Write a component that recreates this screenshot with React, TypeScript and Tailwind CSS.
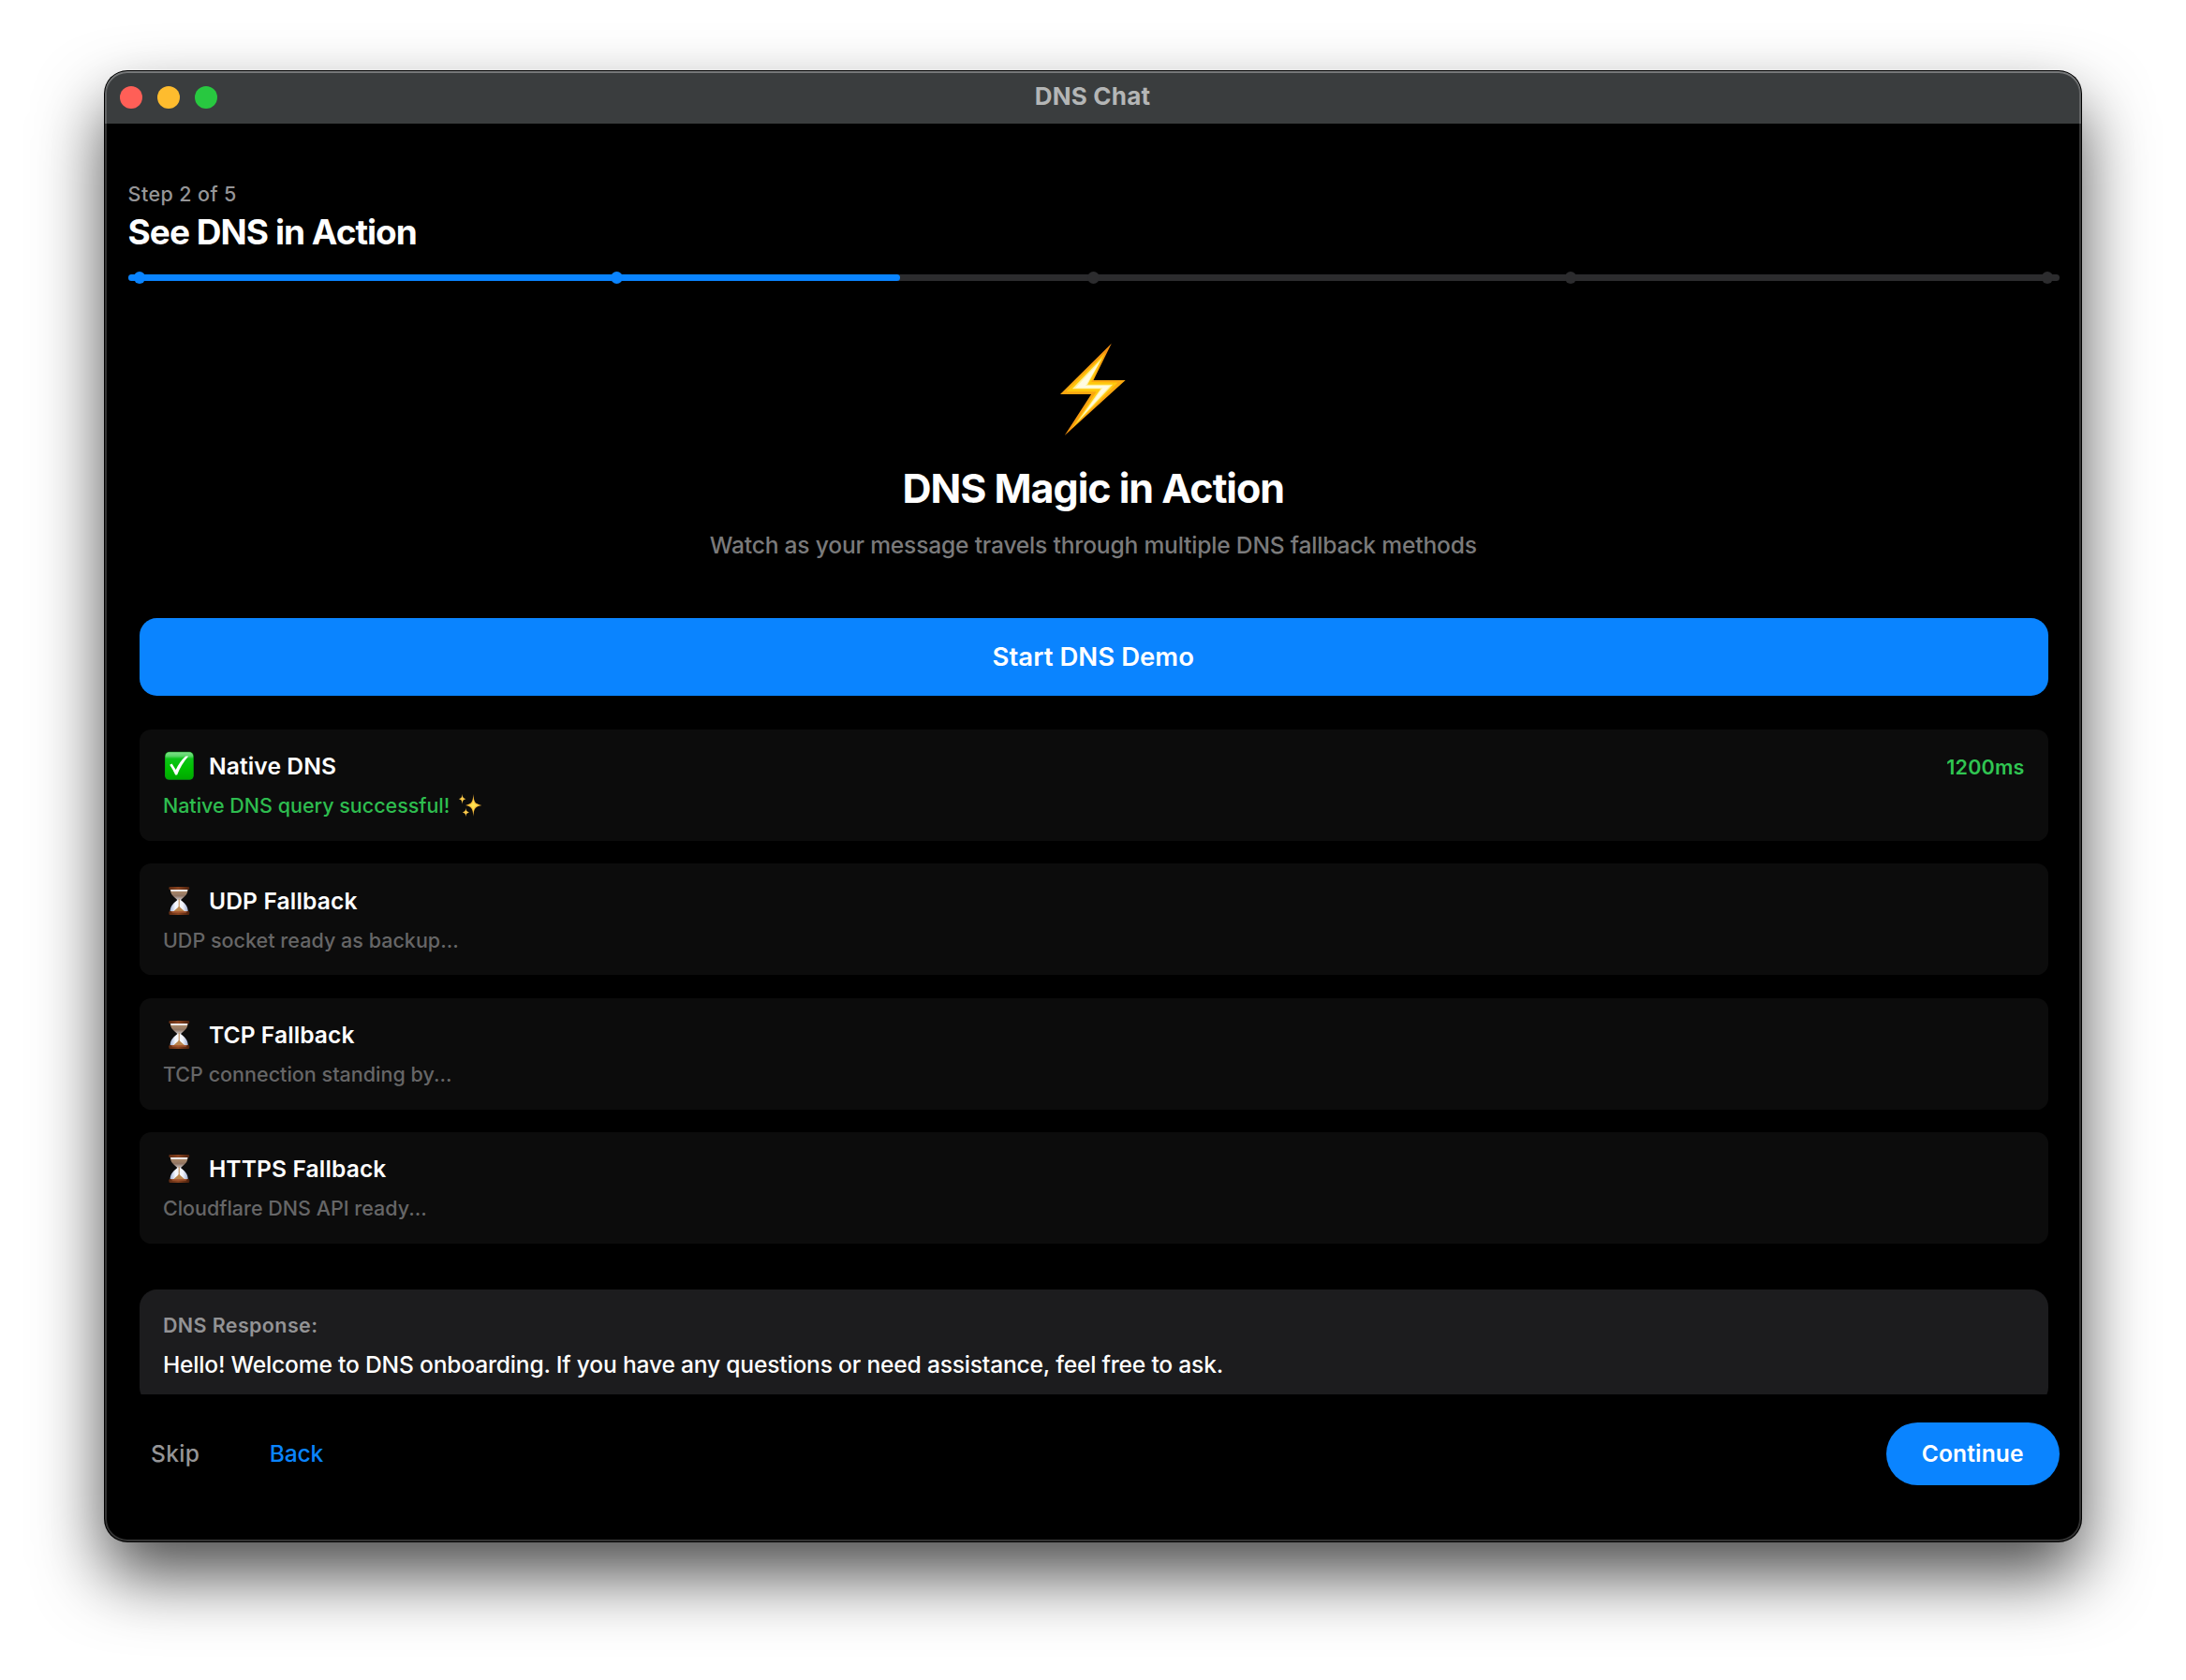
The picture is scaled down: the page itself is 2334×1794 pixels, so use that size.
function BoltIcon() {
  return (
    <svg width="71" height="101" viewBox="97 50 210 300" preserveAspectRatio="none" role="img" aria-label="Lightning bolt">
      <defs>
        <linearGradient id="bolt-edge" x1="0" y1="0" x2="0" y2="1">
          <stop offset="0" stopColor="#f08a12" />
          <stop offset="0.3" stopColor="#fba30c" />
          <stop offset="0.45" stopColor="#fbab10" />
          <stop offset="1" stopColor="#f7930f" />
        </linearGradient>
      </defs>
      <path d="M259 52 202 169 303 169 111 344 195 213 97 213Z" fill="url(#bolt-edge)" />
      <path d="M239 82 195 175 279 176 134 322 211 205 116 205Z" fill="#ffc90d" />
      <path d="M229 98 183 183 263 183 149 304 225 196 135 196Z" fill="#fff3a0" />
      <path d="M221 112 177 187 254 187 169 280 231 193 145 193Z" fill="#fffbe0" />
    </svg>
  );
}

function CheckIcon() {
  return (
    <svg width="34" height="34" viewBox="0 0 34 34" role="img" aria-label="Done">
      <defs>
        <linearGradient id="check-bg" x1="0" y1="0" x2="0" y2="1">
          <stop offset="0" stopColor="#7fe08a" />
          <stop offset="0.14" stopColor="#5ad768" />
          <stop offset="0.24" stopColor="#0cc418" />
          <stop offset="0.6" stopColor="#00c000" />
          <stop offset="1" stopColor="#00a800" />
        </linearGradient>
      </defs>
      <rect x="2" y="1.8" width="30.8" height="30" rx="4.6" fill="#069a10" />
      <rect x="2.6" y="2.3" width="29.6" height="28.8" rx="4.2" fill="url(#check-bg)" />
      <path d="M7.2 15.8 9.6 14.6 13.7 21Q17.6 12.4 24.2 6.4L27.2 6.6Q19.4 15.4 15.1 26.6L13.2 26.6Q10.6 20.6 7.2 15.8Z" fill="#fff" />
    </svg>
  );
}

function HourglassIcon() {
  return (
    <svg width="34" height="34" viewBox="0 0 34 34" role="img" aria-label="Waiting">
      <defs>
        <linearGradient id="hg-wood" x1="0" y1="0" x2="1" y2="0">
          <stop offset="0" stopColor="#5f2b12" />
          <stop offset="0.45" stopColor="#8a4420" />
          <stop offset="1" stopColor="#4a1f0b" />
        </linearGradient>
        <linearGradient id="hg-top" x1="0" y1="0" x2="0" y2="1">
          <stop offset="0" stopColor="#e9e6e6" />
          <stop offset="0.2" stopColor="#a98768" />
          <stop offset="0.6" stopColor="#8f7462" />
          <stop offset="1" stopColor="#cfccd0" />
        </linearGradient>
        <linearGradient id="hg-bottom" x1="0" y1="0" x2="1" y2="0">
          <stop offset="0" stopColor="#9fb0d4" />
          <stop offset="0.3" stopColor="#f7f9ff" />
          <stop offset="0.7" stopColor="#f3f5fc" />
          <stop offset="1" stopColor="#9fadd0" />
        </linearGradient>
      </defs>
      <path d="M7.8 4.6H26.6C26.6 10.4 22.6 13 18.6 16.4H15.8C11.8 13 7.8 10.4 7.8 4.6Z" fill="url(#hg-top)" />
      <path d="M8.2 4.8H26.2L25.6 6.8H8.8Z" fill="#f4f4f8" />
      <path d="M15.8 15.8H18.6C22.6 19 26.8 22 26.8 28.6H7.6C7.6 22 11.8 19 15.8 15.8Z" fill="url(#hg-bottom)" />
      <path d="M16.7 15V23C15.6 25 12.6 26.6 11 28.6H23.6C21.8 26.6 18.8 25 17.7 23V15Z" fill="#b9844c" />
      <rect x="6.4" y="2" width="21.8" height="2.9" rx="1" fill="url(#hg-wood)" />
      <rect x="6.4" y="28" width="21.8" height="4" rx="1.2" fill="url(#hg-wood)" />
      <path d="M8.6 28.2H26L24.6 29.4H10Z" fill="#b4623a" />
    </svg>
  );
}

function SparklesIcon() {
  return (
    <svg className="ml-[8.6px]" width="27" height="26" viewBox="0 0 27 26" role="img" aria-label="Sparkles">
      <path d="M16.4 1C17 9.3 18 11.4 25.4 12.9 18 14.4 17 16.6 16.4 24.8 15.8 16.6 14.8 14.4 8 12.9 14.8 11.4 15.8 9.3 16.4 1Z" fill="#f8b83a" />
      <path d="M16.4 6C16.9 11 17.8 12.1 22 12.9 17.8 13.8 16.9 15 16.4 20 15.9 15 15 13.8 10.8 12.9 15 12.1 15.9 11 16.4 6Z" fill="#ffe14f" />
      <path d="M4.6 0.8C4.9 4.6 5.5 5.4 8.4 6.2 5.5 7 4.9 7.8 4.6 11.8 4.3 7.8 3.7 7 0.8 6.2 3.7 5.4 4.3 4.6 4.6 0.8Z" fill="#fbc94a" />
      <path d="M8.4 15.8C8.7 18.9 9.3 19.6 12 20.4 9.3 21.2 8.7 22 8.4 25.2 8.1 22 7.5 21.2 4.8 20.4 7.5 19.6 8.1 18.9 8.4 15.8Z" fill="#fbc94a" />
    </svg>
  );
}

type Method = {
  name: string;
  nameSpacing: string;
  detail: string;
  detailSpacing: string;
  time?: string;
};

const methods: Method[] = [
  {
    name: "Native DNS",
    nameSpacing: "tracking-[0.12px]",
    detail: "Native DNS query successful!",
    detailSpacing: "tracking-[-0.01px]",
    time: "1200ms",
  },
  {
    name: "UDP Fallback",
    nameSpacing: "tracking-[0.15px]",
    detail: "UDP socket ready as backup...",
    detailSpacing: "tracking-[0.03px]",
  },
  {
    name: "TCP Fallback",
    nameSpacing: "tracking-[0.08px]",
    detail: "TCP connection standing by...",
    detailSpacing: "tracking-[0.02px]",
  },
  {
    name: "HTTPS Fallback",
    nameSpacing: "tracking-[0.12px]",
    detail: "Cloudflare DNS API ready...",
    detailSpacing: "tracking-[0px]",
  },
];

function MethodCard({ method }: { method: Method }) {
  const done = Boolean(method.time);
  return (
    <div className="h-[119px] rounded-[12.3px] bg-[#0c0c0c] pt-[22.3px] pr-[25px] pl-[25px]">
      <div className="flex h-[34px] items-center">
        {done ? <CheckIcon /> : <HourglassIcon />}
        <span className={`ml-[15px] flex-1 text-[24.6px] leading-[34px] font-semibold text-white ${method.nameSpacing}`}>
          {method.name}
        </span>
        {done && (
          <span className="pt-[2px] text-[21.5px] leading-[32px] font-semibold tracking-[0.22px] text-[#30c552]">
            {method.time}
          </span>
        )}
      </div>
      <div
        className={`mt-[10.2px] flex h-[30px] items-center text-[21.5px] leading-[30px] font-[450] ${method.detailSpacing} ${
          done ? "text-[#2ebd4f]" : "text-[#666667]"
        }`}
      >
        {method.detail}
        {done && <SparklesIcon />}
      </div>
    </div>
  );
}

function ProgressTrack({ step, total }: { step: number; total: number }) {
  return (
    <div className="relative mt-[23.4px] h-[6.2px] w-[2062px] rounded-full bg-[#2c2c2e]">
      <div className="h-full rounded-full bg-[#0a84ff]" style={{ width: `${(step / total) * 100}%` }} />
      <div className="absolute inset-x-[6.5px] -top-[3px] flex justify-between">
        {Array.from({ length: total }, (_, i) => (
          <span
            key={i}
            className={`size-[12.3px] rounded-full ${i < step ? "bg-[#0a84ff]" : "bg-[#2c2c2e]"}`}
          />
        ))}
      </div>
    </div>
  );
}

export default function App() {
  return (
    <div className="h-[1794px] w-[2334px] overflow-hidden bg-white pt-[76px] pl-[112px] font-['Inter',sans-serif]">
      <main className="relative flex h-[1570px] w-[2110px] flex-col overflow-hidden rounded-[24px] bg-black shadow-[0_0_0_1px_#000,0_36px_72px_rgba(0,0,0,0.7)]">
        <header className="flex h-[56px] shrink-0 items-center bg-[#3a3d3e]">
          <div className="flex w-[400px] gap-[16px] pl-[16px]">
            <span className="size-[24px] rounded-full bg-[#ff5f57]" />
            <span className="size-[24px] rounded-full bg-[#febc2e]" />
            <span className="size-[24px] rounded-full bg-[#28c840]" />
          </div>
          <h1 className="flex-1 pr-[1px] pb-[2px] text-center text-[26px] leading-[32px] font-bold tracking-[0.23px] text-[#b4b6b6]">
            DNS Chat
          </h1>
          <div className="w-[400px]" />
        </header>

        <section className="shrink-0 pt-[61px] pl-[24.6px]">
          <p className="text-[21.5px] leading-[28px] font-medium tracking-[0.4px] text-[#959597]">Step 2 of 5</p>
          <h2 className="mt-[5px] text-[37px] leading-[44px] font-bold tracking-[-0.96px] text-white">
            See DNS in Action
          </h2>
          <ProgressTrack step={2} total={5} />
        </section>

        <section className="mt-[66px] flex h-[1123px] shrink-0 flex-col overflow-hidden pr-[35.4px] pl-[36.9px]">
          <div className="flex flex-col items-center">
            <BoltIcon />
            <h3 className="mt-[28px] pr-[1px] text-[43px] leading-[52px] font-bold tracking-[-1.02px] text-white">
              DNS Magic in Action
            </h3>
            <p className="mt-[17px] pr-[1px] text-[24.6px] leading-[36px] font-[450] tracking-[-0.195px] text-[#7a7a7b]">
              Watch as your message travels through multiple DNS fallback methods
            </p>
          </div>
          <button className="mt-[60px] h-[83px] shrink-0 rounded-[18.5px] bg-[#0a84ff] pt-[2px] pr-[1px] text-[27.5px] font-semibold tracking-[0.05px] text-white">
            Start DNS Demo
          </button>
          <div className="mt-[36.4px] flex flex-col gap-[24.3px]">
            {methods.map((m) => (
              <MethodCard key={m.name} method={m} />
            ))}
          </div>
          <div className="mt-[48.7px] h-[123px] shrink-0 rounded-[18.5px] bg-[#1c1c1e] px-[25px] pt-[23.3px]">
            <p className="text-[21.5px] leading-[30px] font-semibold tracking-[0.38px] text-[#939395]">DNS Response:</p>
            <p className="mt-[9.7px] text-[24.6px] leading-[34px] font-[450] tracking-[-0.193px] text-white">
              Hello! Welcome to DNS onboarding. If you have any questions or need assistance, feel free to ask.
            </p>
          </div>
        </section>

        <footer className="flex items-center pt-[30px] pr-[23.3px] pl-[49px] text-[24.6px] leading-[34px]">
          <button className="pb-[1px] font-medium tracking-[0.27px] text-[#959597]">Skip</button>
          <button className="ml-[74.6px] pb-[1px] font-medium tracking-[-0.15px] text-[#0a84ff]">Back</button>
          <button className="ml-auto h-[67px] w-[185px] rounded-full bg-[#0a84ff] pb-[1px] font-semibold tracking-[0.14px] text-white">
            Continue
          </button>
        </footer>

        <div className="pointer-events-none absolute inset-0 rounded-[24px] shadow-[inset_0_0_0_2px_rgba(255,255,255,0.2),inset_0_2px_0_0_rgba(255,255,255,0.14)]" />
      </main>
    </div>
  );
}
